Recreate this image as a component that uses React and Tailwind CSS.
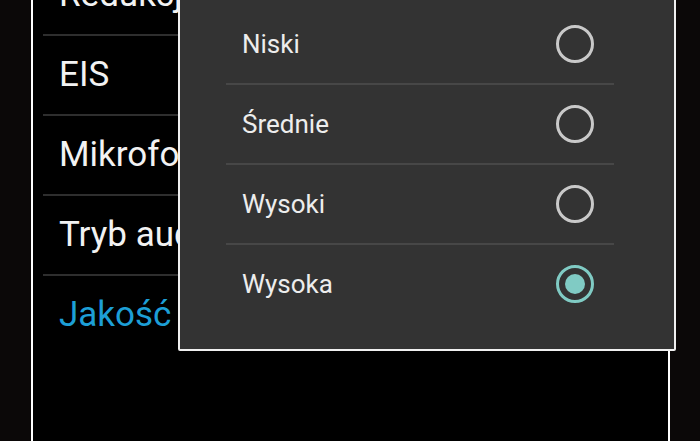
import React from 'react';

const settings = ['Redukcja szumów', 'EIS', 'Mikrofon', 'Tryb audio', 'Jakość wideo'];
const options = ['Niski', 'Średnie', 'Wysoki', 'Wysoka'];
const selected = 'Wysoka';

function Radio({ checked }) {
  if (checked) {
    return (
      <div className="w-[38px] h-[38px] rounded-full border-[3px] border-[#80cbc4] flex items-center justify-center">
        <div className="w-[20px] h-[20px] rounded-full bg-[#80cbc4]" />
      </div>
    );
  }
  return <div className="w-[38px] h-[38px] rounded-full border-[3px] border-[#c9c9c9]" />;
}

export default function App() {
  return (
    <div className="relative w-[700px] h-[441px] overflow-hidden bg-[#0b0808]" style={{ fontFamily: 'Roboto, "Noto Sans", sans-serif' }}>
      {/* settings panel behind the dialog */}
      <div className="ml-[31px] w-[639px] h-full border-x-2 border-white bg-black overflow-hidden">
        <div className="mt-[-44px] pl-[10px]">
          {settings.map((s, i) => (
            <div key={s}>
              <div className={`h-[78px] flex items-center pl-[16px] text-[35px] whitespace-nowrap ${i === settings.length - 1 ? 'text-[#1d9fd6]' : 'text-[#f2f2f2]'}`}>
                {s}
              </div>
              {i < settings.length - 1 && <div className="h-[2px] bg-[#2e2e2e]" />}
            </div>
          ))}
        </div>
      </div>

      {/* dialog */}
      <div className="absolute left-[178px] top-[-38px] w-[498px] border-2 border-[#f0f0f0] rounded-[2px] bg-[#333333] pt-[41px] pb-[26px]">
        <div className="ml-[46px] mr-[60px]">
          {options.map((o, i) => (
            <div key={o}>
              <div className="h-[78px] flex items-center justify-between pl-[16px] pr-[20px]">
                <span className="text-[26px] text-[#ededed]">{o}</span>
                <Radio checked={o === selected} />
              </div>
              {i < options.length - 1 && <div className="h-[2px] bg-[#474747]" />}
            </div>
          ))}
        </div>
      </div>
    </div>
  );
}
